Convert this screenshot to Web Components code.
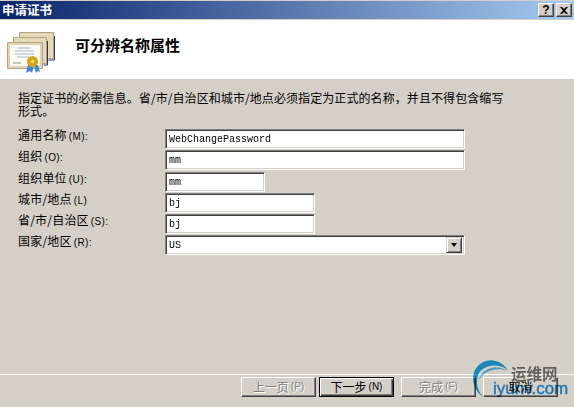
<!DOCTYPE html>
<html lang="zh">
<head>
<meta charset="utf-8">
<title>申请证书</title>
<style>
  html, body { margin: 0; height: 100%; background: #d4d0c8; }
  body { font: 12px "Noto Sans CJK SC", sans-serif; }
</style>
</head>
<body>
<wizard-dialog>
  <title-bar slot="title">申请证书</title-bar>
  <wizard-header slot="header">可分辨名称属性</wizard-header>
  <p slot="intro">指定证书的必需信息。省/市/自治区和城市/地点必须指定为正式的名称，并且不得包含缩写形式。</p>
  <form-field label="通用名称" hotkey="(M):" value="WebChangePassword" width="300"></form-field>
  <form-field label="组织" hotkey="(O):" value="mm" width="300"></form-field>
  <form-field label="组织单位" hotkey="(U):" value="mm" width="100" class="gap"></form-field>
  <form-field label="城市/地点" hotkey="(L)" value="bj" width="150"></form-field>
  <form-field label="省/市/自治区" hotkey="(S):" value="bj" width="150"></form-field>
  <form-field label="国家/地区" hotkey="(R):" value="US" width="300" combo></form-field>
  <win-button slot="buttons" disabled hotkey="(P)">上一页</win-button>
  <win-button slot="buttons" default hotkey="(N)">下一步</win-button>
  <win-button slot="buttons" disabled hotkey="(F)" class="wide">完成</win-button>
  <win-button slot="buttons" class="wide">取消</win-button>
</wizard-dialog>
<site-watermark></site-watermark>

<script>
const UI_FONT = `"Noto Sans CJK SC", sans-serif`;
const HOTKEY_FONT = `10px/14px "Liberation Sans", sans-serif`;

class WizardDialog extends HTMLElement {
  connectedCallback() {
    this.attachShadow({ mode: "open" });
    this.shadowRoot.innerHTML = `
      <style>
        :host {
          display: flex;
          flex-direction: column;
          width: 574px;
          height: 407px;
          overflow: hidden;
          background: #d4d0c8;
          color: #000;
          font: 12px/13px ${UI_FONT};
        }
        .body { flex: 1; padding: 12px 18px 0 18px; }
        ::slotted(p) {
          margin: 0 0 12px 0;
          width: 490px;
          font: 12px/13px ${UI_FONT};
          letter-spacing: .08px;
        }
        .fields { display: flex; flex-direction: column; gap: 1px; }
        .footer {
          border-top: 1px solid #d4d0c8;
          box-shadow: inset 0 1px 0 #fff;
          padding: 3px 16px 10px 0;
          display: flex;
          justify-content: flex-end;
        }
      </style>
      <slot name="title"></slot>
      <slot name="header"></slot>
      <div class="body">
        <slot name="intro"></slot>
        <div class="fields"><slot></slot></div>
      </div>
      <div class="footer"><slot name="buttons"></slot></div>
    `;
  }
}

class TitleBar extends HTMLElement {
  connectedCallback() {
    this.attachShadow({ mode: "open" });
    this.shadowRoot.innerHTML = `
      <style>
        :host {
          display: flex;
          align-items: center;
          justify-content: space-between;
          height: 18px;
          margin: 1px 0;
          padding: 0 2px;
          background: linear-gradient(90deg, #0a246a, #a6caf0);
          color: #fff;
          font: bold 12.5px/18px ${UI_FONT};
        }
        .caption { display: flex; gap: 2px; }
        button {
          width: 16px;
          height: 14px;
          padding: 0;
          display: flex;
          align-items: center;
          justify-content: center;
          background: #d4d0c8;
          border: 1px solid;
          border-color: #fff #404040 #404040 #fff;
          box-shadow: inset -1px -1px 0 #808080;
          color: #000;
          font: bold 12px/12px "Liberation Sans", sans-serif;
        }
      </style>
      <slot></slot>
      <div class="caption">
        <button>?</button>
        <button>
          <svg width="8" height="7" viewBox="0 0 8 7"><path d="M0 0h2l2 2 2-2h2L5 3.500l3 3.500H6L4 5 2 7H0l3-3.500z"/></svg>
        </button>
      </div>
    `;
  }
}

class WizardHeader extends HTMLElement {
  connectedCallback() {
    this.attachShadow({ mode: "open" });
    this.shadowRoot.innerHTML = `
      <style>
        :host {
          display: flex;
          height: 59px;
          background: #fff;
          color: #000;
          font: bold 15px/20px ${UI_FONT};
        }
        svg { margin: 12px 0 0 7px; flex: none; }
        .text { margin: 15px 0 0 20px; }
      </style>
      <svg width="48" height="41" viewBox="0 0 48 41">
        <g stroke="#b3a583" stroke-width="1">
          <path d="M12.500.500h34v26h-34z" fill="#e6d9ba"/>
          <path d="M6.500 5.500h33v26h-33z" fill="#e6d9ba"/>
          <path d="M.500 10.500h35v26h-35z" fill="#e2d4b2"/>
        </g>
        <path d="M47.500 4v24h-6M40.500 9v24h-4" fill="none" stroke="#25335f"/>
        <rect x="3" y="13" width="30" height="21" fill="#fbfbf6"/>
        <path d="M10 16h14M8 19h19M8 22h19M10 25h12" stroke="#a9b3cc"/>
        <path d="M6 31h8" stroke="#8d8d80"/>
        <path d="M21 33l-2 8 4-2 2 2 2-8zM27 33l2 8 2-2 2 1-2-7z" fill="#3f86d8"/>
        <circle cx="25.500" cy="29.500" r="5.500" fill="#d9a514"/>
        <circle cx="25.500" cy="29.500" r="2.500" fill="#f2d458" stroke="#a87a10" stroke-width=".6"/>
      </svg>
      <div class="text"><slot></slot></div>
    `;
  }
}

class FormField extends HTMLElement {
  connectedCallback() {
    const width = this.getAttribute("width");
    const combo = this.hasAttribute("combo");
    this.attachShadow({ mode: "open" });
    this.shadowRoot.innerHTML = `
      <style>
        :host {
          display: flex;
          align-items: center;
          height: 20px;
          font: 12px/13px ${UI_FONT};
        }
        :host(.gap) { margin-top: 1px; }
        label { width: 147px; flex: none; margin-top: -6px; white-space: nowrap; letter-spacing: .2px; }
        label span { font: ${HOTKEY_FONT}; margin-left: 2px; letter-spacing: .4px; }
        .box {
          box-sizing: border-box;
          width: ${width}px;
          height: 20px;
          display: flex;
          align-items: center;
          justify-content: space-between;
          padding: 2px 2px 2px 3px;
          background: #fff;
          border: 1px solid;
          border-color: #808080 #fff #fff #808080;
          box-shadow: inset 1px 1px 0 #404040, inset -1px -1px 0 #d4d0c8;
          font: 10px/14px "Liberation Mono", monospace;
        }
        .box span { position: relative; top: 1px; will-change: transform; }
        .arrow {
          box-sizing: border-box;
          width: 16px;
          height: 16px;
          display: flex;
          align-items: center;
          justify-content: center;
          background: #d4d0c8;
          border: 1px solid;
          border-color: #d4d0c8 #404040 #404040 #d4d0c8;
          box-shadow: inset 1px 1px 0 #fff, inset -1px -1px 0 #808080;
        }
        .arrow i {
          border: solid transparent;
          border-width: 4px 3.500px 0;
          border-top-color: #000;
        }
      </style>
      <label>${this.getAttribute("label")}<span>${this.getAttribute("hotkey")}</span></label>
      <div class="box">
        <span>${this.getAttribute("value")}</span>
        ${combo ? '<div class="arrow"><i></i></div>' : ""}
      </div>
    `;
  }
}

class WinButton extends HTMLElement {
  connectedCallback() {
    const hotkey = this.getAttribute("hotkey");
    this.attachShadow({ mode: "open" });
    this.shadowRoot.innerHTML = `
      <style>
        :host {
          box-sizing: border-box;
          display: flex;
          align-items: center;
          justify-content: center;
          width: 75px;
          height: 20px;
          margin-left: 3px;
          background: #d4d0c8;
          border: 1px solid;
          border-color: #fff #404040 #404040 #fff;
          box-shadow: inset -1px -1px 0 #808080;
          font: 12px/14px ${UI_FONT};
        }
        :host(.wide) { margin-left: 7px; }
        :host([default]) {
          border-color: #000;
          box-shadow: inset 1px 1px 0 #fff, inset -1px -1px 0 #404040, inset -2px -2px 0 #808080;
        }
        :host([disabled]) { color: #808080; text-shadow: 1px 1px 0 #fff; }
        span { font: ${HOTKEY_FONT}; margin-left: 2px; }
      </style>
      <slot></slot>${hotkey ? `<span>${hotkey}</span>` : ""}
    `;
  }
}

class SiteWatermark extends HTMLElement {
  connectedCallback() {
    this.attachShadow({ mode: "open" });
    this.shadowRoot.innerHTML = `
      <style>
        :host {
          position: absolute;
          left: 470px;
          top: 358px;
          width: 104px;
          height: 49px;
          pointer-events: none;
          mix-blend-mode: multiply;
        }
        svg { position: absolute; left: 0; top: 0; }
        .cn {
          position: absolute;
          left: 41px;
          top: 6px;
          color: #757575;
          font: bold 15.500px/18px ${UI_FONT};
        }
        .en {
          position: absolute;
          left: 23px;
          top: 21px;
          color: #2a90e6;
          font: 17px/20px "Liberation Sans", sans-serif;
          -webkit-text-stroke: .4px #2a90e6;
        }
      </style>
      <svg width="104" height="49" viewBox="0 0 104 49">
        <path d="M13 39C2 31-1 15 10 6 19-1 31 2 38 12 29 5 15 6 9 15 5 23 7 32 13 39z" fill="#1fa4ee"/>
        <path d="M9 22C11 11 27 5 37 13 28 9 14 12 9 22z" fill="#5cc0f4"/>
      </svg>
      <div class="cn">运维网</div>
      <div class="en">iyunv.com</div>
    `;
  }
}

customElements.define("wizard-dialog", WizardDialog);
customElements.define("title-bar", TitleBar);
customElements.define("wizard-header", WizardHeader);
customElements.define("form-field", FormField);
customElements.define("win-button", WinButton);
customElements.define("site-watermark", SiteWatermark);
</script>
</body>
</html>
